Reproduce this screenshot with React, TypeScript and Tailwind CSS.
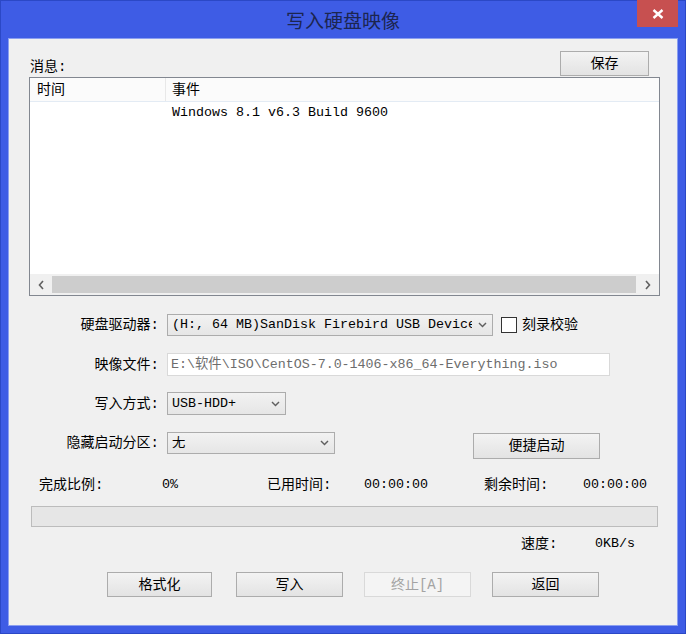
import React from 'react';

const Chevron: React.FC = () => (
  <svg width="9" height="6" viewBox="0 0 9 6">
    <path d="M1 1 L4.5 4.6 L8 1" fill="none" stroke="#5f5f5f" strokeWidth="1.4" />
  </svg>
);

const Arrow: React.FC<{ dir: 'left' | 'right' }> = ({ dir }) => (
  <svg width="6" height="10" viewBox="0 0 6 10">
    <path
      d={dir === 'left' ? 'M5 1 L1.5 5 L5 9' : 'M1 1 L4.5 5 L1 9'}
      fill="none"
      stroke="#606060"
      strokeWidth="1.6"
    />
  </svg>
);

interface ButtonProps {
  label: string;
  className?: string;
  disabled?: boolean;
}

const Button: React.FC<ButtonProps> = ({ label, className = '', disabled }) => (
  <div
    className={`flex items-center justify-center border ${
      disabled
        ? 'border-[#d9d9d9] bg-[#f4f4f4] text-[#a3a3a3]'
        : 'border-[#acacac] bg-linear-to-b from-[#f3f3f3] to-[#e3e3e3] text-black'
    } ${className}`}
  >
    {label}
  </div>
);

const Select: React.FC<{ value: string; className: string }> = ({ value, className }) => (
  <div
    className={`flex items-center border border-[#acacac] bg-linear-to-b from-[#f2f2f2] to-[#e6e6e6] ${className}`}
  >
    <span className="flex-1 overflow-hidden whitespace-nowrap pl-[4px] text-[13.33px]">{value}</span>
    <span className="flex w-[20px] shrink-0 justify-center">
      <Chevron />
    </span>
  </div>
);

const Label: React.FC<{ text: string }> = ({ text }) => (
  <div className="w-[150px] shrink-0 text-right">{text}</div>
);

export default function App() {
  return (
    <div className="flex h-[634px] w-[686px] flex-col border border-[#2b48c6] bg-[#3e5ce5] font-['Liberation_Mono','Noto_Sans_CJK_SC',monospace] text-[14px] leading-none text-black">
      {/* title bar */}
      <div className="relative flex h-[37px] shrink-0 items-center justify-center">
        <span className="font-['Noto_Sans_CJK_SC',sans-serif] text-[19px] text-[#1c2550]">写入硬盘映像</span>
        <div className="absolute right-[7px] top-[-1px] flex h-[27px] w-[41px] items-center justify-center bg-[#c75050]">
          <svg width="12" height="10" viewBox="0 0 12 10">
            <path d="M1.5 1 L10.5 9 M10.5 1 L1.5 9" stroke="#fff" strokeWidth="2.4" />
          </svg>
        </div>
      </div>

      {/* client area */}
      <div className="mx-[7px] mb-[7px] flex flex-1 flex-col border border-[#8a9ef0] bg-[#f0f0f0]">
        <div className="flex items-end justify-between pr-[28px] pt-[12px]">
          <div className="pb-[2px] pl-[21px]">消息:</div>
          <Button label="保存" className="h-[25px] w-[89px]" />
        </div>

        {/* message list */}
        <div className="ml-[20px] mt-[1px] flex h-[219px] w-[631px] flex-col border border-[#828790] bg-white">
          <div className="flex h-[24px] shrink-0 items-center border-b border-[#e3ebf4] bg-[#fbfbfb]">
            <div className="flex h-full w-[136px] items-center border-r border-[#e8e8e8] pl-[7px]">时间</div>
            <div className="pl-[6px]">事件</div>
          </div>
          <div className="flex-1">
            <div className="flex h-[21px] items-center">
              <div className="w-[142px]" />
              <span className="text-[13.33px]">Windows 8.1 v6.3 Build 9600</span>
            </div>
          </div>
          <div className="flex h-[21px] shrink-0 items-center bg-[#f0f0f0]">
            <div className="flex w-[22px] justify-center">
              <Arrow dir="left" />
            </div>
            <div className="h-[17px] flex-1 bg-[#cdcdcd]" />
            <div className="flex w-[23px] justify-center">
              <Arrow dir="right" />
            </div>
          </div>
        </div>

        {/* drive */}
        <div className="mt-[18px] flex h-[22px] items-center">
          <Label text="硬盘驱动器:" />
          <Select value="(H:, 64 MB)SanDisk Firebird USB Device" className="ml-[8px] h-[22px] w-[326px]" />
          <div className="ml-[8px] h-[16px] w-[16px] border border-[#333] bg-white" />
          <span className="ml-[5px]">刻录校验</span>
        </div>

        {/* image file */}
        <div className="mt-[17px] flex h-[23px] items-center">
          <Label text="映像文件:" />
          <div className="ml-[8px] flex h-[23px] w-[443px] items-center overflow-hidden whitespace-nowrap border border-[#d9d9d9] bg-white pl-[3px] text-[13.33px] text-[#6d6d6d]">
            E:\软件\ISO\CentOS-7.0-1406-x86_64-Everything.iso
          </div>
        </div>

        {/* write mode */}
        <div className="mt-[16px] flex h-[23px] items-center">
          <Label text="写入方式:" />
          <Select value="USB-HDD+" className="ml-[8px] h-[23px] w-[119px]" />
        </div>

        {/* hidden partition */}
        <div className="mt-[17px] flex h-[26px] items-start">
          <div className="flex h-[22px] items-center">
            <Label text="隐藏启动分区:" />
          </div>
          <Select value="无" className="ml-[8px] h-[22px] w-[168px]" />
          <Button label="便捷启动" className="ml-[138px] mt-[1px] h-[26px] w-[127px]" />
        </div>

        {/* stats */}
        <div className="mt-[17px] flex h-[20px] items-center pl-[30px]">
          <div className="w-[123px]">完成比例:</div>
          <div className="w-[105px] text-[13.33px]">0%</div>
          <div className="w-[97px]">已用时间:</div>
          <div className="w-[120px] text-[13.33px]">00:00:00</div>
          <div className="w-[99px]">剩余时间:</div>
          <div className="text-[13.33px]">00:00:00</div>
        </div>

        <div className="ml-[22px] mt-[11px] h-[21px] w-[627px] border border-[#bcbcbc] bg-[#e6e6e6]" />

        <div className="mt-[7px] flex h-[20px] items-center pl-[512px]">
          <div className="w-[74px]">速度:</div>
          <div className="text-[13.33px]">0KB/s</div>
        </div>

        {/* action buttons */}
        <div className="mt-[18px] flex pl-[98px]">
          <Button label="格式化" className="h-[25px] w-[105px]" />
          <Button label="写入" className="ml-[24px] h-[25px] w-[107px]" />
          <Button label="终止[A]" className="ml-[21px] h-[25px] w-[107px]" disabled />
          <Button label="返回" className="ml-[21px] h-[25px] w-[107px]" />
        </div>
      </div>
    </div>
  );
}
